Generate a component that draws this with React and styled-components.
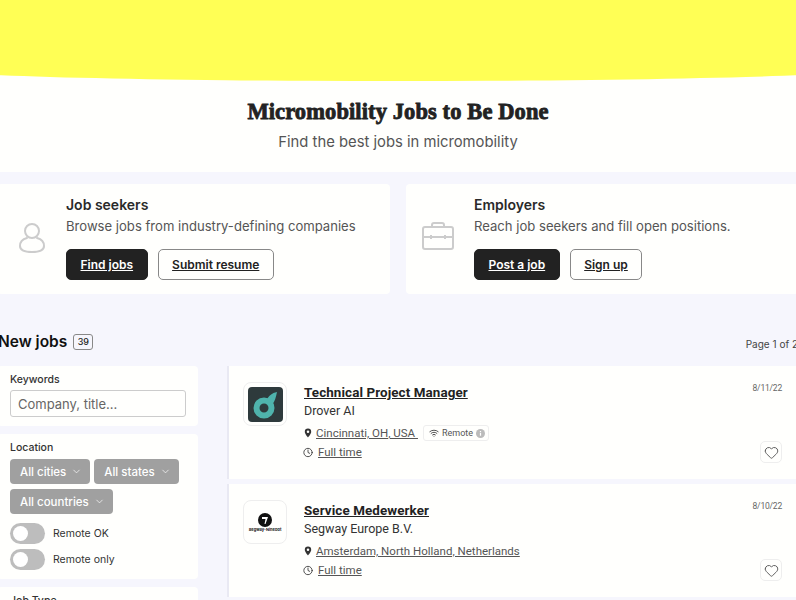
import React from 'react';
import styled, { createGlobalStyle } from 'styled-components';
import { Clock, Wifi, Heart, ChevronDown } from 'lucide-react';

const GlobalStyle = createGlobalStyle`
  html, body {
    margin: 0;
    padding: 0;
    background: #f6f6fd;
    font-family: Inter, "Liberation Sans", sans-serif;
    color: #222;
  }
  * { box-sizing: border-box; }
`;

const Page = styled.div`
  width: 796px;
  height: 600px;
  overflow: hidden;
  position: relative;
`;

const Hero = styled.header`
  height: 172px;
  background: #fffffd;
  overflow: hidden;
  text-align: center;
`;

const Band = styled.div`
  width: 900px;
  height: 81px;
  margin-left: -52px;
  background: #ffff55;
  border-radius: 0 0 50% 50% / 0 0 11px 11px;
`;

const Title = styled.h1`
  margin: 18px 0 0;
  font-family: "Liberation Serif", serif;
  font-size: 22.5px;
  line-height: 26px;
  font-weight: 700;
  color: #222;
  -webkit-text-stroke: 0.8px #222;
  letter-spacing: 0.1px;
`;

const Subtitle = styled.p`
  margin: 7px 0 0;
  font-size: 14.8px;
  line-height: 20px;
  color: #555;
`;

const Wide = styled.div`
  width: 800px;
  margin-left: -2px;
`;

const Cta = styled.section`
  display: grid;
  grid-template-columns: 392px 392px;
  gap: 16px;
  padding-top: 12px;
`;

const CtaCard = styled.div`
  height: 110px;
  background: #fffffd;
  border-radius: 4px;
  padding: 12px 0 0 ${p => p.$pad}px;
  display: flex;
  gap: ${p => p.$gap}px;
`;

const CtaIcon = styled.div`
  width: ${p => p.$w}px;
  padding-top: 26px;
  flex: none;
`;

const CtaTitle = styled.div`
  font-size: 14px;
  line-height: 18px;
  font-weight: 600;
  color: #2a2a2a;
`;

const CtaText = styled.div`
  margin-top: 3px;
  font-size: 13.1px;
  line-height: 18px;
  color: #555;
`;

const Buttons = styled.div`
  display: flex;
  gap: 10px;
  margin-top: 14px;
`;

const Button = styled.a`
  height: 31px;
  padding: 0 13.5px;
  display: flex;
  align-items: center;
  border-radius: 5px;
  font-size: 12px;
  font-weight: 600;
  text-decoration: underline;
  border: 1px solid ${p => (p.$dark ? '#222' : '#888')};
  background: ${p => (p.$dark ? '#222' : '#fffffd')};
  color: ${p => (p.$dark ? '#fff' : '#222')};
`;

const ListHead = styled.div`
  height: 72px;
  padding-top: 38px;
  display: flex;
  align-items: flex-start;
`;

const ListTitle = styled.h2`
  margin: 0;
  font-size: 15.5px;
  line-height: 20px;
  font-weight: 600;
  color: #111;
`;

const Count = styled.span`
  margin: 2px 0 0 6px;
  width: 20px;
  height: 16px;
  border: 1px solid #888;
  border-radius: 3px;
  font-size: 9px;
  font-weight: 500;
  line-height: 14px;
  text-align: center;
`;

const PageNo = styled.span`
  margin: 5px 0 0 auto;
  font-size: 10px;
  line-height: 14px;
  color: #444;
`;

const Columns = styled.div`
  display: grid;
  grid-template-columns: 200px 571px;
  gap: 29px;
`;

const Sidebar = styled.aside`
  display: flex;
  flex-direction: column;
  gap: 8px;
`;

const Panel = styled.div`
  background: #fffffd;
  border-radius: 4px;
  padding: 7px 12px 9px;
`;

const FieldLabel = styled.div`
  font-size: 10.5px;
  line-height: 14px;
  font-weight: 500;
  color: #333;
`;

const Input = styled.input`
  display: block;
  width: 176px;
  height: 27px;
  margin-top: 3px;
  padding: 0 7px;
  border: 1px solid #ccc;
  border-radius: 3px;
  background: #fffffd;
  font: 13px Inter, sans-serif;
  &::placeholder { color: #666; opacity: 1; }
`;

const Chips = styled.div`
  display: flex;
  flex-wrap: wrap;
  gap: 5px 4px;
  margin-top: 4px;
`;

const Chip = styled.div`
  height: 25px;
  padding: 0 8px 0 10px;
  display: flex;
  align-items: center;
  gap: 5px;
  background: #a0a0a0;
  border-radius: 4px;
  color: #fff;
  font-size: 11.5px;
  font-weight: 500;
`;

const ToggleRow = styled.div`
  display: flex;
  align-items: center;
  gap: 8px;
  margin-top: ${p => p.$top}px;
  font-size: 10.5px;
  color: #333;
`;

const Track = styled.div`
  width: 35px;
  height: 21px;
  padding: 3px;
  border-radius: 11px;
  background: #bdbdbd;
`;

const Knob = styled.div`
  width: 15px;
  height: 15px;
  border-radius: 50%;
  background: #fff;
`;

const Jobs = styled.div`
  display: flex;
  flex-direction: column;
  gap: 5px;
`;

const JobCard = styled.article`
  height: 113px;
  padding: 16px 16px 16px 14px;
  display: flex;
  background: #fffffd;
  border-left: 2px solid #e9e9f3;
`;

const LogoBox = styled.div`
  width: 44px;
  height: 44px;
  flex: none;
  display: flex;
  flex-direction: column;
  align-items: center;
  justify-content: center;
  border: 1px solid #eee;
  border-radius: 8px;
`;

const LogoWord = styled.span`
  font-size: 4px;
  line-height: 5px;
  font-weight: 700;
  color: #222;
`;

const JobBody = styled.div`
  margin: 2px 0 0 17px;
  flex: 1;
`;

const JobTitle = styled.a`
  display: block;
  font-family: Roboto, sans-serif;
  font-size: 13.4px;
  line-height: 18px;
  font-weight: 700;
  letter-spacing: 0.1px;
  color: #222;
  text-decoration: underline;
`;

const Company = styled.div`
  font-family: Roboto, sans-serif;
  font-size: 12.5px;
  line-height: 18px;
  color: #333;
`;

const MetaRow = styled.div`
  display: flex;
  align-items: center;
  height: 16px;
  margin-top: ${p => p.$top}px;
  color: #555;
`;

const MetaIcon = styled.span`
  width: 10px;
  margin-left: -1px;
  display: flex;
  justify-content: center;
  margin-right: ${p => p.$gap}px;
`;

const MetaLink = styled.a`
  font-family: Roboto, sans-serif;
  font-size: 11.5px;
  color: #555;
  text-decoration: underline;
  white-space: pre;
`;

const RemoteTag = styled.span`
  margin-left: 5px;
  height: 16px;
  padding: 0 3px 0 5px;
  display: flex;
  align-items: center;
  gap: 3px;
  border: 1px solid #eee;
  border-radius: 3px;
  font-family: Roboto, sans-serif;
  font-size: 9px;
  color: #555;
`;

const JobSide = styled.div`
  display: flex;
  flex-direction: column;
  align-items: flex-end;
  justify-content: space-between;
`;

const JobDate = styled.div`
  font-family: Roboto, sans-serif;
  font-size: 8.5px;
  line-height: 12px;
  letter-spacing: -0.2px;
  color: #666;
`;

const HeartButton = styled.button`
  width: 22px;
  height: 22px;
  padding: 0;
  display: flex;
  align-items: center;
  justify-content: center;
  background: #fffffd;
  border: 1px solid #eee;
  border-radius: 5px;
  color: #555;
`;

const PersonIcon = () => (
  <svg width="26" height="32" viewBox="0 0 26 32" fill="none" stroke="#ccc" strokeWidth="2">
    <circle cx="13" cy="9" r="7" />
    <path d="M8 16c-4 1-7 4-7 8 0 4 5 6 12 6s12-2 12-6c0-4-3-7-7-8" strokeLinecap="round" />
  </svg>
);

const CaseIcon = () => (
  <svg width="32" height="28" viewBox="0 0 32 28" fill="none" stroke="#ccc" strokeWidth="2">
    <rect x="1" y="5" width="30" height="22" rx="2" />
    <path d="M10 5V3a2 2 0 0 1 2-2h8a2 2 0 0 1 2 2v2M1 15h30M9 13v4M23 13v4" />
  </svg>
);

const PinIcon = () => (
  <svg width="8" height="10" viewBox="0 0 10 12">
    <path d="M5 .5A4 4 0 0 0 1 4.500c0 2.800 4 7 4 7s4-4.200 4-7a4 4 0 0 0-4-4zm0 5.600a1.600 1.600 0 1 1 0-3.200 1.600 1.600 0 0 1 0 3.200z" fill="#333" />
  </svg>
);

const InfoDot = () => (
  <svg width="9" height="9" viewBox="0 0 9 9">
    <circle cx="4.500" cy="4.500" r="4.500" fill="#bbb" />
    <path d="M4.500 2v.9M4.500 3.800v3" stroke="#fff" strokeWidth="1.200" />
  </svg>
);

const DroverLogo = () => (
  <svg width="35" height="35" viewBox="0 0 35 35">
    <rect width="35" height="35" rx="4" fill="#2e3a3c" />
    <circle cx="16" cy="21" r="7.500" fill="none" stroke="#4fb3ac" strokeWidth="6" />
    <path d="M19 13c1-4 5-7 10-8-1 5-2 9-5 13z" fill="#4fb3ac" />
  </svg>
);

const SegwayLogo = () => (
  <svg width="14" height="14" viewBox="0 0 14 14">
    <circle cx="7" cy="7" r="7" fill="#111" />
    <path d="M4 4h6L7.500 11H6.500l1-5H4z" fill="#fff" />
  </svg>
);

const JobRow = ({ logo, title, company, place, remote, date }) => (
  <JobCard>
    <LogoBox>{logo}</LogoBox>
    <JobBody>
      <JobTitle>{title}</JobTitle>
      <Company>{company}</Company>
      <MetaRow $top={5}>
        <MetaIcon $gap={3}><PinIcon /></MetaIcon>
        <MetaLink>{place}</MetaLink>
        {remote && (
          <RemoteTag>
            <Wifi size={10} color="#333" />
            Remote
            <InfoDot />
          </RemoteTag>
        )}
      </MetaRow>
      <MetaRow $top={3}>
        <MetaIcon $gap={5}><Clock size={11} color="#333" /></MetaIcon>
        <MetaLink>Full time</MetaLink>
      </MetaRow>
    </JobBody>
    <JobSide>
      <JobDate>{date}</JobDate>
      <HeartButton><Heart size={15} strokeWidth={1.5} /></HeartButton>
    </JobSide>
  </JobCard>
);

const App = () => (
  <Page>
    <GlobalStyle />
    <Hero>
      <Band />
      <Title>Micromobility Jobs to Be Done</Title>
      <Subtitle>Find the best jobs in micromobility</Subtitle>
    </Hero>
    <Wide>
      <Cta>
        <CtaCard $pad={21} $gap={19}>
          <CtaIcon $w={28}><PersonIcon /></CtaIcon>
          <div>
            <CtaTitle>Job seekers</CtaTitle>
            <CtaText>Browse jobs from industry-defining companies</CtaText>
            <Buttons>
              <Button $dark>Find jobs</Button>
              <Button>Submit resume</Button>
            </Buttons>
          </div>
        </CtaCard>
        <CtaCard $pad={16} $gap={18}>
          <CtaIcon $w={34}><CaseIcon /></CtaIcon>
          <div>
            <CtaTitle>Employers</CtaTitle>
            <CtaText>Reach job seekers and fill open positions.</CtaText>
            <Buttons>
              <Button $dark>Post a job</Button>
              <Button>Sign up</Button>
            </Buttons>
          </div>
        </CtaCard>
      </Cta>
      <ListHead>
        <ListTitle>New jobs</ListTitle>
        <Count>39</Count>
        <PageNo>Page 1 of 2</PageNo>
      </ListHead>
      <Columns>
        <Sidebar>
          <Panel>
            <FieldLabel>Keywords</FieldLabel>
            <Input placeholder="Company, title..." />
          </Panel>
          <Panel>
            <FieldLabel>Location</FieldLabel>
            <Chips>
              <Chip>All cities <ChevronDown size={11} strokeWidth={1.5} /></Chip>
              <Chip>All states <ChevronDown size={11} strokeWidth={1.5} /></Chip>
              <Chip>All countries <ChevronDown size={11} strokeWidth={1.5} /></Chip>
            </Chips>
            <ToggleRow $top={9}><Track><Knob /></Track>Remote OK</ToggleRow>
            <ToggleRow $top={5}><Track><Knob /></Track>Remote only</ToggleRow>
          </Panel>
          <Panel>
            <FieldLabel>Job Type</FieldLabel>
          </Panel>
        </Sidebar>
        <Jobs>
          <JobRow logo={<DroverLogo />} title="Technical Project Manager" company="Drover AI" place={'Cincinnati, OH, USA '} remote date="8/11/22" />
          <JobRow
            logo={<><SegwayLogo /><LogoWord>Segway-Ninebot</LogoWord></>}
            title="Service Medewerker"
            company="Segway Europe B.V."
            place="Amsterdam, North Holland, Netherlands"
            date="8/10/22"
          />
        </Jobs>
      </Columns>
    </Wide>
  </Page>
);

export default App;
